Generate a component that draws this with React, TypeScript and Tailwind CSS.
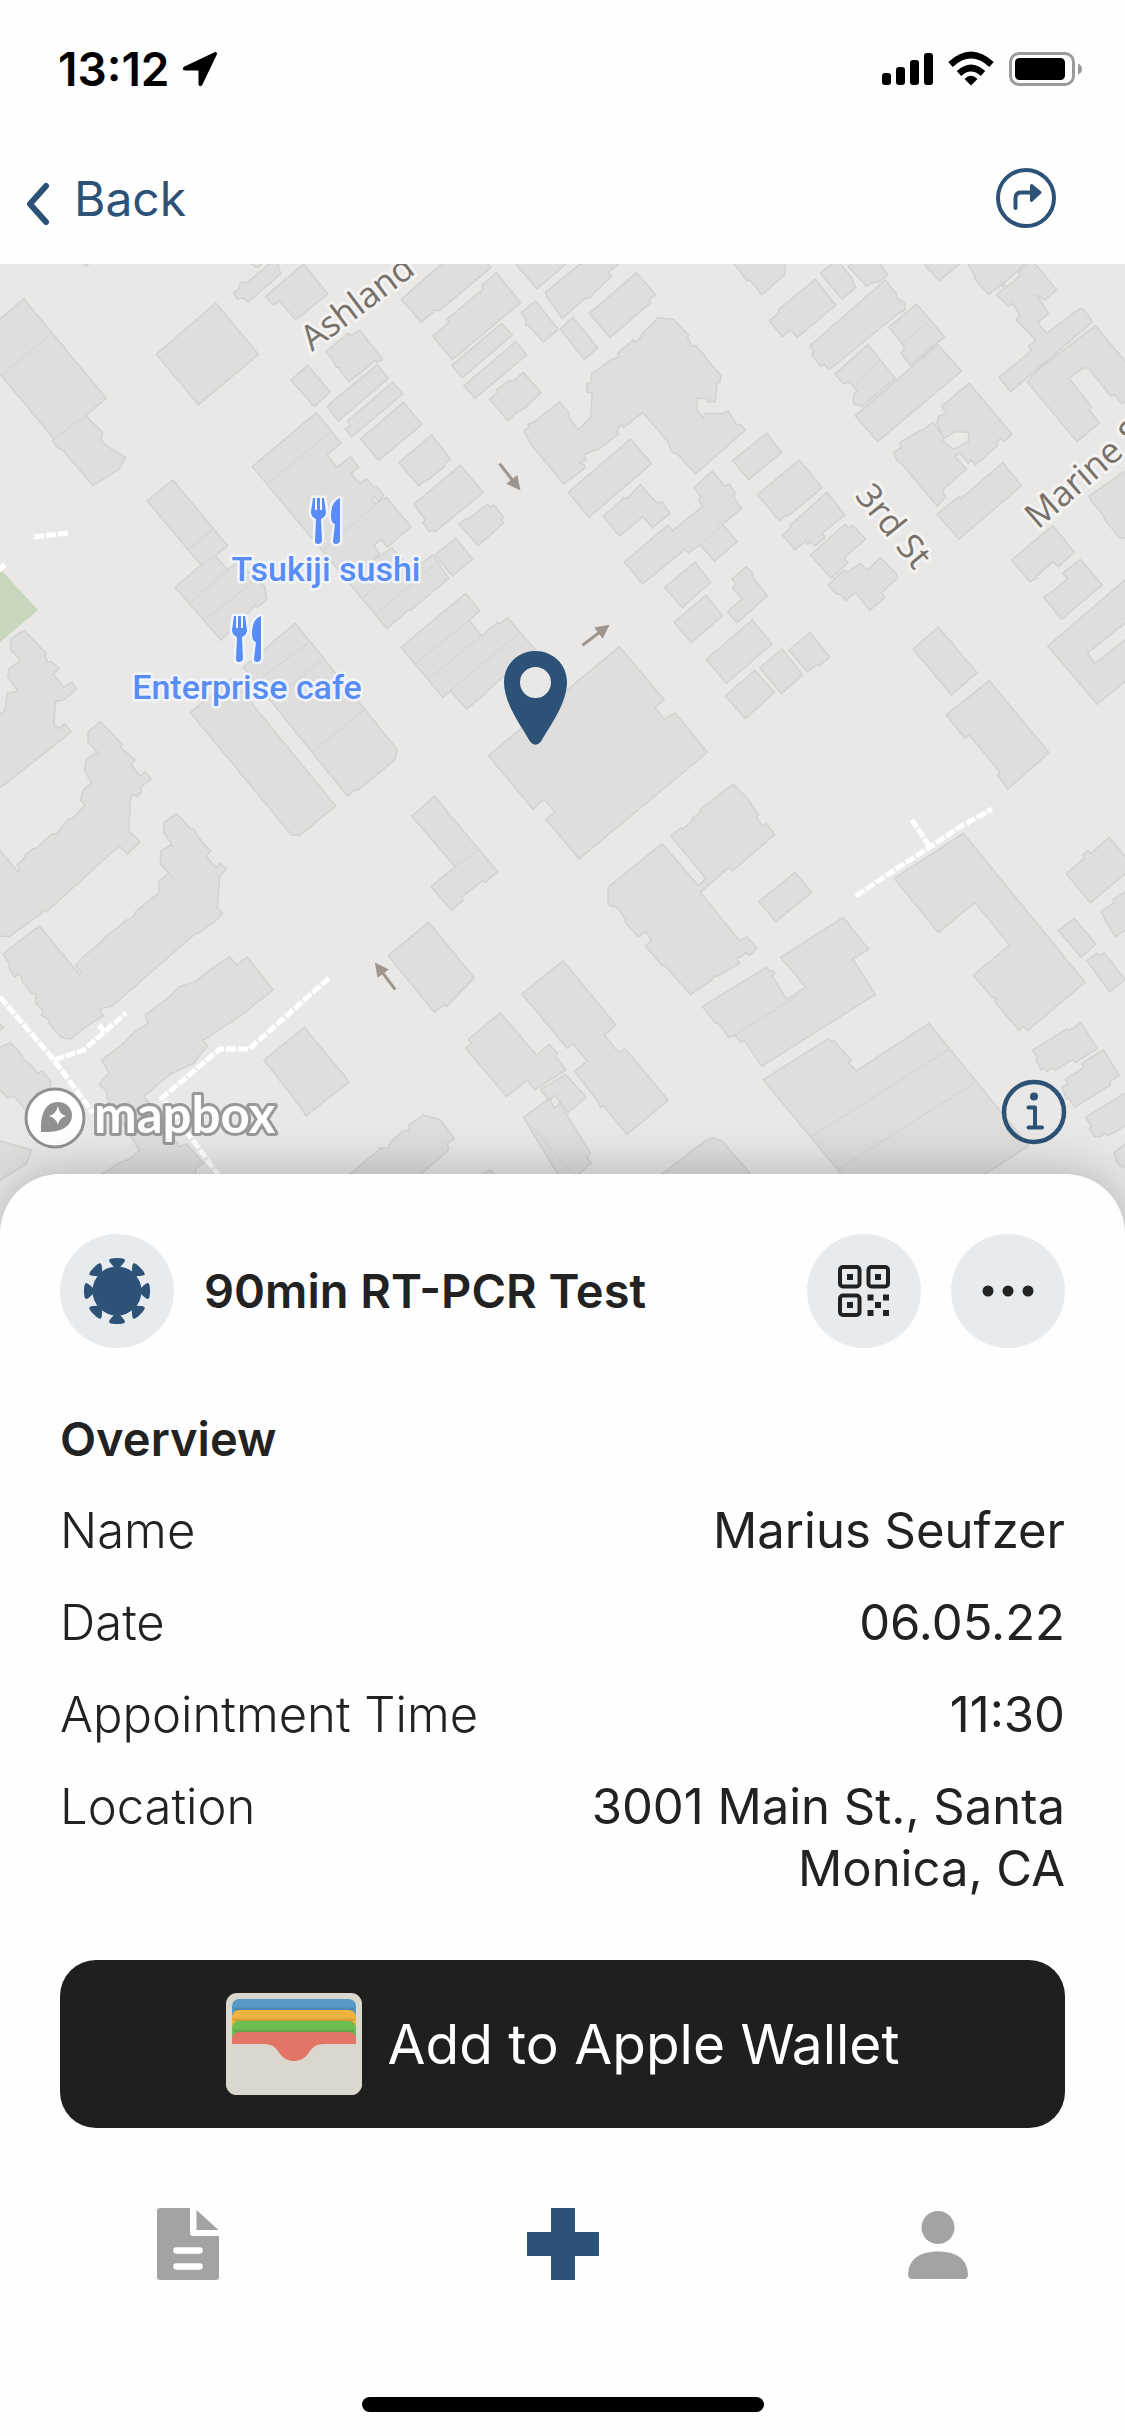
// AppointmentPage: map header + bottom sheet with the details of a booked test

interface Detail {
  label: string;
  value: string;
}

const DETAILS: Detail[] = [
  { label: 'Name', value: 'Marius Seufzer' },
  { label: 'Date', value: '06.05.22' },
  { label: 'Appointment Time', value: '11:30' },
  { label: 'Location', value: '3001 Main St., Santa Monica, CA' },
];

interface Tile {
  transform: string;
  buildings: string[];
  seams: string;
}

// Each tile has its own coordinate grid, the transform brings it onto the map
const TILES: Tile[] = [
  {
    transform: 'translate(0 -4) scale(0.359 0.3333)',
    buildings: [
      'M-5 182 66 116 296 415 238 467 286 517 281 540 296 556 350 593 331 628 259 677 172 567 165 568 146 543 150 536-5 336Z',
      'M230 8 240 20 250 8Z',
      'M601 129 720 283 553 434 435 283Z',
      'M650 98 666 86 668 70 679 66 684 71 750 12 778 8 774 22 783 40 692 126 676 113 662 117Z',
      'M698 8 712 22 722 20 730 8Z',
      'M846 12 913 102 833 172 823 179 779 123 762 135 739 110Z',
      'M1234 8 1355 8 1368 22 1224 152 1213 150 1174 187 1117 118Z',
      'M1383 38 1450 128 1260 299 1205 228 1251 186 1245 178 1345 88 1342 76Z',
      'M1397 190 1427 225 1288 353 1258 316Z',
      'M1437 245 1467 285 1323 415 1292 377Z',
      'M1458 337 1507 398 1472 432 1466 441 1444 455 1435 462 1415 483 1364 418 1384 399 1384 388 1420 360 1428 364Z',
      'M1434 8 1496 87 1580 8Z',
      'M1492 123 1555 208 1514 246 1470 195 1464 195 1466 180 1452 157Z',
      'M1002 211 1066 298 1050 308 1044 300 1032 314 972 365 946 330 948 322 936 322 929 304 909 274 970 220 980 226Z',
      'M857 316 920 396 875 440 810 360Z',
      'M1051 314 1082 355 942 483 912 440 920 430Z',
      'M1094 366 1122 402 980 530 962 508 975 497 968 483Z',
      'M1124 427 1175 493 1055 601 1004 537Z',
      'M1202 525 1255 597 1242 608 1240 618 1187 665 1180 665 1166 677 1111 608Z',
      'M881 458 950 549 911 585 938 622 976 590 999 622 978 641 1002 670 1022 656 1040 682 1048 680 1069 706 1055 724 1044 710 1035 718 1044 732 1076 712 1145 800 1079 862 1061 838 1041 856 1057 880 1040 900 1092 864 1125 905 1145 935 1205 884 1250 955 1144 1051 1140 1048 1078 1106 703 620Z',
      'M1282 616 1346 697 1212 815 1204 808 1197 815 1178 788 1185 780 1152 734Z',
      'M1357 732 1366 742 1375 735 1402 770 1397 782 1402 790 1332 857 1278 792 1300 774 1304 778Z',
      'M1269 835 1317 897 1260 948 1212 885Z',
      'M1297 1000 1336 1052 1307 1082 1342 1127 1387 1086 1394 1092 1414 1073 1490 1168 1350 1300 1350 1304 1300 1347 1254 1292 1234 1313 1117 1162Z',
      'M481 660 634 857 600 888 634 930 660 905 738 980 743 1018 718 1042 710 1036 616 1141 488 982 560 915 410 723Z',
      'M822 1089 1040 1380 1106 1468 1100 1500 995 1592 988 1590 968 1609 797 1380 678 1222Z',
      'M645 1256 935 1638 835 1727 812 1725 530 1358Z',
      'M68 1112 130 1182 124 1188 134 1208 142 1204 165 1225 148 1242 178 1282 200 1267 213 1287 178 1320 155 1324 150 1392 165 1406 180 1392 198 1415 145 1462-5 1588-5 1366 14 1352 20 1300 50 1294 22 1250 24 1228 58 1200 30 1170 30 1138 50 1122Z',
    ],
    seams:
      'M142 220 10 342M238 467 150 538M920 515 747 671M1044 735 900 870M1120 905 1008 1018M1218 908 1046 1062M1307 1082 1158 1210M1342 1127 1196 1255M1448 1117 1254 1292M595 806 528 866M600 888 560 915M634 930 528 1030M700 970 568 1082M860 1148 715 1265M895 1200 756 1325M1012 1350 869 1477',
  },
  {
    transform: 'translate(562 -4) scale(0.359 0.3333)',
    buildings: [
      'M55 8-47 97-40 115-33 122 0 175 64 115 75 115 138 48 128 38 162 8Z',
      'M-5 208 30 172 100 263 62 298Z',
      'M208 38 260 103 242 120 247 128 134 233 76 160Z',
      'M5 672 65 624 62 614 48 610 68 600 60 586 90 570 100 570 158 522 153 512 165 493 172 502 225 458 292 540 305 575 325 586 372 642 511 510 500 495 487 494 462 453 452 461 399 460 394 474 376 450 376 414 407 416 407 426 427 426 432 367 440 367 443 347 372 256 362 260 349 229 353 226 311 178 269 173 222 222 218 233 206 247 200 238 155 280 160 291 135 300 83 342 80 368 69 370 69 396 84 400 80 472 44 510 18 470 20 458 0 435-6 425-80 488-95 492-91 500-106 514-85 555Z',
      'M477 8 516 62 524 60 557 104 620 45 622 8Z',
      'M705 58 763 135 655 233 637 209 614 230 577 182 605 158 602 150Z',
      'M720 40 756 8 772 8 806 52 812 70 818 80 808 92 780 117Z',
      'M798 20 812 8 884 8 907 45 880 68 875 64 848 78Z',
      'M900 60 930 100 935 116 955 130 955 150 935 162 744 330 730 313 720 318 695 283 702 275 690 258Z',
      'M987 132 1066 230 972 316 945 280 954 268 947 250 910 202Z',
      'M852 254 887 300 928 355 835 440 812 430 812 405 822 392 800 365 785 372 760 342Z',
      'M1047 254 1113 333 879 545 817 467Z',
      'M1005 8 1051 62 1112 8Z',
      'M1128 8 1152 50 1148 55 1188 103 1230 70 1272 30 1288 8Z',
      'M1300 8 1318 12 1378 90 1345 120 1322 105 1355 160 1325 188 1350 220 1440 148 1450 145 1478 185 1250 395 1217 352 1308 272 1300 258 1320 240 1265 180 1275 165 1255 130 1243 138 1210 105 1230 85 1225 68 1240 80 1275 48 1270 35Z',
      'M1486 197 1600 345 1600 400 1560 432 1540 405 1528 408 1465 323 1450 325 1412 355 1475 440 1468 450 1497 488 1435 545 1296 366 1330 325Z',
      'M1134 370 1253 522 1232 545 1222 535 1210 548 1212 558 1152 615 1140 600 1132 610 1108 578 1095 590 1127 627 1060 690 1068 712 1045 738 945 610 935 605 923 578 945 562 940 548 1000 510 1005 512 1033 486 1062 530 1045 490 1048 468 1072 460 1057 440 1120 382ZM1058 540 1095 515 1133 517 1132 545 1090 568Z',
      'M1228 608 1280 677 1106 838 1045 763 1105 710 1112 715Z',
      'M570 520 612 577 520 659 475 601Z',
      'M661 600 725 683 630 768 625 765 605 782 544 704Z',
      'M738 697 788 765 726 818 732 833 705 857 692 845 683 853 679 843 649 869 614 825 636 805 636 795Z',
      'M788 793 797 803 810 797 846 838 785 895 797 907 750 955 692 885Z',
      'M887 893 930 940 935 955 890 998 900 1012 857 1052 818 998 790 1022 775 1002 765 1002 742 975 785 930 795 937 830 910 850 930Z',
      'M418 633 455 680 466 672 483 700 478 710 500 745 447 793 488 845 425 903 385 855 352 878 342 868 225 972 173 906 295 795 309 812 392 738 380 722 387 712 369 682Z',
      'M191 537 250 611 75 772 17 697Z',
      'M219 674 265 730 277 725 301 760 252 803 225 770 160 828 115 768 165 722 170 713 180 716Z',
      'M370 907 414 967 335 1043 286 982Z',
      'M401 1006 447 1067 360 1148 312 1087Z',
      'M513 920 533 943 528 948 572 1007 487 1089 461 1055 502 1016 475 985 484 970 473 958Z',
      'M530 1080 585 1152 458 1270 402 1198Z',
      'M537 1231 592 1297 511 1376 454 1308Z',
      'M613 1167 670 1244 612 1301 551 1224Z',
      'M691 1118 746 1191 717 1218 710 1214 683 1236 632 1170Z',
      'M1048 1101 1156 1238 1085 1305 978 1167Z',
      'M1367 797 1428 877 1382 920 1368 905 1320 950 1323 955 1303 965 1252 900Z',
      'M1443 898 1505 975 1392 1078 1341 1012 1360 1000 1408 955 1395 940Z',
      'M1600 610 1468 708 1475 725 1510 770 1512 780 1555 835 1600 830Z',
      'M1575 954 1353 1158 1491 1333 1575 1258 1575 1134 1485 1210 1463 1180 1575 1083Z',
      'M1190 1262 1356 1477 1332 1502 1242 1587 1213 1545 1220 1537 1135 1425 1122 1435 1070 1365Z',
      'M160 1160 285 1320 258 1342 285 1378 315 1358 405 1477 48 1797-45 1678-20 1655-50 1618-81 1648-205 1487Z',
    ],
    seams: 'M1026 182 947 250M885 302 820 375M392 738 447 795 385 855',
  },
  {
    transform: 'translate(0 456) scale(0.359 0.3333)',
    buildings: [
      'M280 5 325 55 340 75 336 82 358 102 376 120 365 133 390 168 405 155 421 177 390 203 395 214 382 230 372 222 364 235 358 335 372 345 390 365 355 403 332 378 132 573 118 572 118 580 90 600 75 612 25 650-5 648-5 385 50 455 56 450 47 435 70 412 70 405 92 386 103 384 120 365 145 342 158 342 190 298 200 298 220 275 237 257 225 240 231 210 255 190 235 150 240 120 265 100 276 103 245 65 245 35Z',
      'M491 280 530 325 540 328 552 350 570 375 587 392 575 408 600 442 615 430 630 448 612 468 606 565 620 580 598 605 575 620 560 635 540 645 313 858 285 865 278 872 288 888 240 920 195 958 172 953 140 915 135 900 115 885 120 872 100 850 100 820 90 822 62 785 60 770 52 762 40 772 28 750 25 730 8 702 75 645 110 618 222 765 230 760 210 738 232 710 258 688 275 672 300 645 325 625 350 602 370 592 378 575 412 545 442 520 442 485 470 460 482 475 447 432 447 395 475 375 482 380 455 335 457 308Z',
      'M640 711 660 735 688 711 760 808 748 822 710 852 680 880 565 962 578 978 560 1000 540 1030 475 1062 400 1130 430 1165 500 1280 520 1272 567 1330 545 1345 545 1365 280 1365 330 1330 360 1318 388 1290 300 1140 295 1110 275 1095 303 1058 283 1020 340 975 375 935 412 912 405 885 470 832 500 800 545 785 590 745Z',
      'M848 923 965 1075 973 1085 852 1188 840 1165 735 1020Z',
      'M1194 607 1321 773 1243 860 1238 853 1210 877 1081 707Z',
      'M1210 229 1386 455 1353 487 1344 482 1285 532 1290 542 1257 571 1201 500 1268 440 1147 288Z',
      'M-5 1080-5 985 28 968 62 1005 62 1015 95 1045 105 1060 118 1052 142 1085 138 1110 75 1175 40 1130 20 1133-5 1105Z',
      'M-5 1262 88 1290 75 1330-5 1385Z',
      'M-5 908 10 922-5 935Z',
      'M972 1365 1060 1285 1080 1285 1090 1265 1120 1235 1140 1230 1140 1215 1178 1186 1225 1198 1265 1255 1246 1270 1250 1290 1170 1365Z',
      'M1393 878 1495 1005 1530 973 1553 1000 1548 1010 1577 1050 1490 1110 1468 1080 1411 1130 1297 985 1313 970 1305 958Z',
      'M1506 1108 1575 1063 1633 1132 1583 1177 1545 1125 1530 1142Z',
      'M1458 1192 1530 1136 1545 1165 1560 1150 1645 1300 1635 1312 1647 1330 1610 1365 1555 1365Z',
      'M1340 1365 1366 1350 1380 1365Z',
    ],
    seams: 'M1332 390 1268 440M1458 1192 1600 1365',
  },
  {
    transform: 'translate(562 456) scale(0.359 0.3333)',
    buildings: [
      'M3 722 150 915 118 945 158 998 176 986 296 1141 181 1244 115 1157 108 1162 97 1140 35 1055 70 1023 30 970 15 985-112 822Z',
      'M477 192 520 240 547 285 540 292 560 318 568 310 593 343 475 453 465 442 385 517 495 663 515 650 543 685 522 707 512 698 497 712 485 712 495 730 435 768 425 768 415 782 358 824 285 735 280 737 232 678 250 660 232 635 212 650 175 605 178 597 152 562 135 558 128 548 128 502 279 371 380 497 401 475 303 348 332 322 336 328 365 300 362 295 385 278 385 268 410 248Z',
      'M649 457 695 517 596 605 548 545Z',
      'M783 592 854 688 810 717 873 823 556 1039 508 962 498 968 482 945 465 953 435 908 428 910 391 860 530 768 570 742 578 755 588 752 593 762 585 768 626 838 679 802 609 712Z',
      'M743 955 750 965 758 963 805 1020 798 1028 820 1053 1022 910 1300 1278 1175 1365 780 1365 560 1079Z',
      'M1118 340 1457 787 1297 932 1285 920 1273 932 1205 845 1210 835 1198 832 1145 766 1247 675 1150 548 1048 638 925 475Z',
      'M1524 352 1580 425 1580 452 1472 548 1405 461 1455 415 1450 405 1465 392 1474 400Z',
      'M1427 595 1487 672 1446 712 1383 632Z',
      'M1462 722 1490 700 1500 706 1510 698 1568 778 1526 816Z',
      'M1580 508 1535 540 1538 548 1502 573 1515 605 1541 650 1580 622Z',
      'M1445 908 1491 985 1430 1028 1422 1018 1375 1050 1362 1045 1350 1055 1343 1045 1335 1050 1320 1020 1326 1015 1311 990 1408 927 1412 932Z',
      'M1508 990 1553 1067 1526 1085 1528 1095 1428 1162 1412 1135 1405 1137 1392 1100 1410 1092 1402 1078 1453 1043 1447 1030Z',
      'M1580 1112 1458 1192 1475 1218 1470 1225 1482 1250 1500 1250 1515 1240 1522 1247 1580 1210Z',
      'M1580 1262 1537 1300 1545 1325 1558 1340 1580 1345Z',
      'M276 1365 400 1262 420 1254 445 1262 528 1365Z',
    ],
    seams: 'M482 945 662 822M1078 988 695 1250M1152 1086 770 1348',
  },
];

const FOOTPATHS = [
  'M34 273 68 269',
  'M-2 306 5 301',
  'M0 733 54 796 93 849',
  'M54 796 84 786 126 749',
  'M104 768 99 761',
  'M329 714 249 785 220 785 162 834 219 912',
  'M856 632 890 609 930 583 960 563 992 545',
  'M930 583 912 556',
];

const ROAD_LABELS = [
  { text: 'Ashland', x: 312, y: 88, angle: -37 },
  { text: '3rd St', x: 854, y: 232, angle: 51 },
  { text: 'Marine St', x: 1038, y: 266, angle: -41 },
];

const PLACES = [
  { name: 'Tsukiji sushi', x: 326, y: 257 },
  { name: 'Enterprise cafe', x: 247, y: 375 },
];

const ARROWS = [
  { x: 510, y: 213, angle: 52 },
  { x: 596, y: 371, angle: -37 },
  { x: 385, y: 712, angle: -127 },
];

function StreetMap() {
  return (
    <svg
      viewBox="0 0 1125 970"
      preserveAspectRatio="xMidYMin slice"
      className="absolute inset-0 h-full w-full"
      role="img"
      aria-label="Map of the test location"
    >
      <path d="M3 308 38 346-2 380-2 309Z" fill="#c8d6bd" />
      {TILES.map((tile) => (
        <g key={tile.transform} transform={tile.transform} stroke="#d3d2d0" strokeLinejoin="round">
          {tile.buildings.map((d) => (
            <path key={d} d={d} fill="#dfdedd" fillRule="evenodd" strokeWidth="1.5" vectorEffect="non-scaling-stroke" />
          ))}
          <path d={tile.seams} fill="none" strokeWidth="1" vectorEffect="non-scaling-stroke" />
        </g>
      ))}
      <g fill="none" stroke="#fff" strokeWidth="5" strokeDasharray="10 2">
        {FOOTPATHS.map((d) => (
          <path key={d} d={d} />
        ))}
      </g>
      {ARROWS.map((a) => (
        <g key={a.x} transform={`translate(${a.x} ${a.y}) rotate(${a.angle})`}>
          <path d="M-17 0H6" stroke="#9f958c" strokeWidth="3" />
          <path d="M3-7 17 0 3 7Z" fill="#9f958c" />
        </g>
      ))}
      {ROAD_LABELS.map((l) => (
        <text
          key={l.text}
          transform={`translate(${l.x} ${l.y}) rotate(${l.angle})`}
          className="font-['Open_Sans',sans-serif] text-[35px]"
          fill="#77716a"
          stroke="#f3f2f1"
          strokeWidth="6"
          strokeLinejoin="round"
          paintOrder="stroke"
        >
          {l.text}
        </text>
      ))}
      {PLACES.map((p) => (
        <g key={p.name} transform={`translate(${p.x} ${p.y})`} fill="#5a8cf5" stroke="#f0f4fb" strokeLinejoin="round" paintOrder="stroke">
          <path
            strokeWidth="5"
            d="M-13-23-15-9Q-15-4-10-2L-11 20Q-11 23-8 23T-4 20L-5-2Q0-4 0-9L-2-23H-4L-4-11H-6L-6-23H-9L-9-11H-11L-11-23ZM14-23Q5-20 5-5 5 2 9 3L7 20Q7 23 10 23T14 20Z"
          />
          <text y="60" textAnchor="middle" strokeWidth="5" className="font-[Roboto,sans-serif] text-[34px] font-medium">
            {p.name}
          </text>
        </g>
      ))}
      <path
        d="M535.5 387C518 387 504 400.500 504 418C504 440 522 463 530 477.500Q535.500 484 541 477.500C549 463 567 440 567 418C567 400.500 553 387 535.500 387ZM535.500 403A15.500 15.500 0 1 1 535.500 434A15.500 15.500 0 1 1 535.500 403Z"
        fill="#2d5278"
        fillRule="evenodd"
      />
    </svg>
  );
}

function MapboxLogo() {
  return (
    <svg width="262" height="80" viewBox="0 -8 262 80" role="img" aria-label="Mapbox">
      <circle cx="33" cy="32" r="29" fill="#fff" stroke="#929191" strokeWidth="3" />
      <path d="M19 46C18 27 24 16 36 16C44 16 50 22 50 29C50 41 38 47 19 46Z" fill="#929191" />
      <path d="M36 20Q37 28 44 30Q37 32 36 39Q34 32 27 30Q34 28 36 20Z" fill="#fff" />
      <text
        x="72"
        y="47"
        className="font-[Lato,sans-serif] text-[51px] font-bold"
        fill="#fff"
        stroke="#9a9999"
        strokeWidth="6"
        strokeLinejoin="round"
        paintOrder="stroke"
      >
        mapbox
      </text>
    </svg>
  );
}

function StatusBar() {
  return (
    <div className="flex h-[138px] items-center justify-between pr-[43px] pl-[58px] text-black">
      <div className="flex items-center gap-3">
        <span className="text-[46px] leading-none font-semibold">13:12</span>
        <svg width="36" height="36" viewBox="0 0 36 36" fill="currentColor" aria-hidden="true">
          <path d="M32.500 1.200 2.500 15.500C0 17 .5 19.300 3 19.500H15.500Q16.500 19.500 16.500 20.500V33C16.700 35.500 19 36 20.500 33.500L34.800 3.500C35.500 1.800 34.200.4 32.500 1.200Z" />
        </svg>
      </div>
      <svg width="200" height="36" viewBox="0 0 200 36" aria-hidden="true">
        <rect x="0" y="22" width="9" height="12" rx="3" />
        <rect x="14" y="16" width="9" height="18" rx="3" />
        <rect x="28" y="9" width="9" height="25" rx="3" />
        <rect x="42" y="2" width="9" height="32" rx="3" />
        <path d="M89 34.500 82.500 28Q89 21.500 95.500 28Z" />
        <path d="M77 22.500Q89 11.500 101 22.500" fill="none" stroke="#000" strokeWidth="6.500" />
        <path d="M68.500 13.500Q89-5.500 109.500 13.500" fill="none" stroke="#000" strokeWidth="6.500" />
        <rect x="128.500" y="2.500" width="63" height="31" rx="8.500" fill="none" stroke="#9b9b9b" strokeWidth="3" />
        <rect x="133" y="7" width="50" height="22" rx="4.500" />
        <path d="M196 12.500Q200 14 200 18T196 23.500Z" fill="#9b9b9b" />
      </svg>
    </div>
  );
}

function VirusIcon() {
  return (
    <svg width="68" height="68" viewBox="-34 -34 68 68" fill="#2d5278" aria-hidden="true">
      <circle r="24.500" />
      {[0, 45, 90, 135, 180, 225, 270, 315].map((a) => (
        <path key={a} transform={`rotate(${a})`} d="M-8-31Q-7.500-33 0-33T8-31Q8-29 3-24H-3Q-8-29-8-31Z" />
      ))}
    </svg>
  );
}

function QrIcon() {
  return (
    <svg width="52" height="52" viewBox="0 0 52 52" fill="#222" aria-hidden="true">
      <g fill="none" stroke="#222" strokeWidth="4">
        <rect x="2" y="2" width="19.500" height="19.500" rx="3" />
        <rect x="30.500" y="2" width="19.500" height="19.500" rx="3" />
        <rect x="2" y="30.500" width="19.500" height="19.500" rx="3" />
      </g>
      <path d="M9 9h6v6H9zM37 9h6v6h-6zM9 37h6v6H9zM29.500 29.500h6v6h-6zM45 29.500h6v6h-6zM37 37h6v6h-6zM29.500 45h6v6h-6zM45 45h6v6h-6z" />
    </svg>
  );
}

function WalletIcon() {
  return (
    <svg width="136" height="102" viewBox="0 0 136 102" aria-hidden="true">
      <defs>
        <linearGradient id="shade" x1="0" y1="0" x2="0" y2="1">
          <stop offset="0.6" stopColor="#000" stopOpacity="0" />
          <stop offset="1" stopColor="#000" stopOpacity="0.2" />
        </linearGradient>
      </defs>
      <rect width="136" height="102" rx="11" fill="#dad7cf" />
      <rect x="6" y="6" width="124" height="40" rx="7" fill="#5799c8" />
      <rect x="6" y="6" width="124" height="12" rx="6" fill="url(#shade)" />
      <rect x="6" y="17" width="124" height="30" rx="7" fill="#f1b340" />
      <rect x="6" y="17" width="124" height="12" rx="6" fill="url(#shade)" />
      <rect x="6" y="28" width="124" height="30" rx="7" fill="#6dbe50" />
      <rect x="6" y="28" width="124" height="12" rx="6" fill="url(#shade)" />
      <rect x="6" y="39" width="124" height="40" rx="7" fill="#e27566" />
      <path d="M0 51H38C47 51 50 55 54 61C58 66 63 68 68 68S78 66 82 61C86 55 89 51 98 51H136V91A11 11 0 0 1 125 102H11A11 11 0 0 1 0 91Z" fill="#dad7cf" />
    </svg>
  );
}

function Header() {
  return (
    <header className="flex h-[126px] items-center justify-between pr-[69px] pl-[26px] text-[#2d5278]">
      <button type="button" className="-mt-1 flex items-center gap-6 text-[48px] leading-none">
        <svg width="24" height="44" viewBox="0 0 24 44" fill="none" stroke="currentColor" strokeWidth="6" strokeLinecap="round" strokeLinejoin="round" className="mt-2" aria-hidden="true">
          <path d="M20 5 4 23 20 41" />
        </svg>
        Back
      </button>
      <button type="button" aria-label="Directions">
        <svg width="60" height="60" viewBox="0 0 60 60" fill="none" stroke="currentColor" strokeWidth="4" className="-mt-1.5">
          <circle cx="30" cy="30" r="28" />
          <path d="M19.500 40V30Q19.500 24.500 25 24.500H36" strokeLinecap="round" />
          <path d="M35.500 17.500 44 24.500 35.500 32.500Z" fill="currentColor" strokeWidth="3" strokeLinejoin="round" />
        </svg>
      </button>
    </header>
  );
}

function TabBar() {
  return (
    <nav className="mt-20 grid grid-cols-3 justify-items-center text-[#a3a3a3]">
      <a href="#results" aria-label="Results">
        <svg width="62" height="72" viewBox="0 0 62 72" fill="currentColor">
          <path d="M3 0H33V25A3 3 0 0 0 36 28H62V69A3 3 0 0 1 59 72H3A3 3 0 0 1 0 69V3A3 3 0 0 1 3 0ZM39.500 2 61.500 22H39.500Z" />
          <path d="M19.500 42.500H42.500M19.500 58.500H42.500" stroke="#fff" strokeWidth="6.500" strokeLinecap="round" />
        </svg>
      </a>
      <a href="#tests" aria-label="Tests" className="text-[#2d5278]">
        <svg width="72" height="72" viewBox="0 0 72 72" fill="currentColor">
          <path d="M24 0H48V24H72V48H48V72H24V48H0V24H24Z" />
        </svg>
      </a>
      <a href="#profile" aria-label="Profile">
        <svg width="60" height="72" viewBox="0 0 60 72" fill="currentColor">
          <circle cx="30" cy="19.500" r="16.500" />
          <path d="M0 66C1 52 10 43.500 30 43.500S59 52 60 66Q60 71 56 71H4Q0 71 0 66Z" />
        </svg>
      </a>
    </nav>
  );
}

export default function App() {
  return (
    <div className="flex min-h-screen flex-col bg-[#fefefe] font-[Inter,sans-serif] text-[#222]">
      <StatusBar />
      <Header />

      <section className="relative min-h-[600px] flex-1 overflow-hidden bg-[#e9e8e6]">
        <StreetMap />
        <div className="absolute bottom-[76px] left-[22px]">
          <MapboxLogo />
        </div>
        <button type="button" aria-label="Map information" className="absolute right-[58px] bottom-[89px] text-[#2d5278]">
          <svg width="66" height="66" viewBox="0 0 66 66" fill="none" stroke="currentColor" strokeWidth="4.500">
            <circle cx="33" cy="33" r="30" />
            <circle cx="33" cy="17.500" r="4" fill="currentColor" stroke="none" />
            <path d="M27.500 28.500H34V48M27.500 48.500H41" strokeWidth="4" strokeLinecap="round" strokeLinejoin="round" />
          </svg>
        </button>
      </section>

      <main className="relative -mt-[60px] rounded-t-[60px] bg-[#fefefe] pt-[60px] pb-6 shadow-[0_0_50px_rgba(0,0,0,0.25)]">
        <div className="px-[60px]">
          <div className="flex items-center">
            <div className="flex size-[114px] items-center justify-center rounded-full bg-[#e8ebee]">
              <VirusIcon />
            </div>
            <h1 className="ml-[30px] flex-1 text-[47px] leading-[62px] font-semibold">90min RT-PCR Test</h1>
            <div className="flex gap-[30px]">
              <button type="button" aria-label="Show QR code" className="flex size-[114px] items-center justify-center rounded-full bg-[#e8ebee]">
                <QrIcon />
              </button>
              <button type="button" aria-label="More options" className="flex size-[114px] items-center justify-center rounded-full bg-[#e8ebee]">
                <svg width="52" height="12" viewBox="0 0 52 12" fill="#222">
                  <circle cx="6" cy="6" r="5.500" />
                  <circle cx="26" cy="6" r="5.500" />
                  <circle cx="46" cy="6" r="5.500" />
                </svg>
              </button>
            </div>
          </div>

          <h2 className="mt-[60px] text-[47px] leading-[62px] font-semibold">Overview</h2>
          <dl className="mt-[30px] flex flex-col gap-[30px] text-[49px] leading-[62px]">
            {DETAILS.map((d) => (
              <div key={d.label} className="flex justify-between">
                <dt className="font-light">{d.label}</dt>
                <dd className="max-w-[540px] text-right">{d.value}</dd>
              </div>
            ))}
          </dl>

          <button type="button" className="mt-[60px] flex h-[168px] w-full items-center justify-center gap-[26px] rounded-[36px] bg-[#1f1f1f] text-[55px] text-white">
            <WalletIcon />
            Add to Apple Wallet
          </button>
        </div>

        <TabBar />
        <div className="mx-auto mt-[117px] h-[15px] w-[402px] rounded-full bg-black" />
      </main>
    </div>
  );
}
